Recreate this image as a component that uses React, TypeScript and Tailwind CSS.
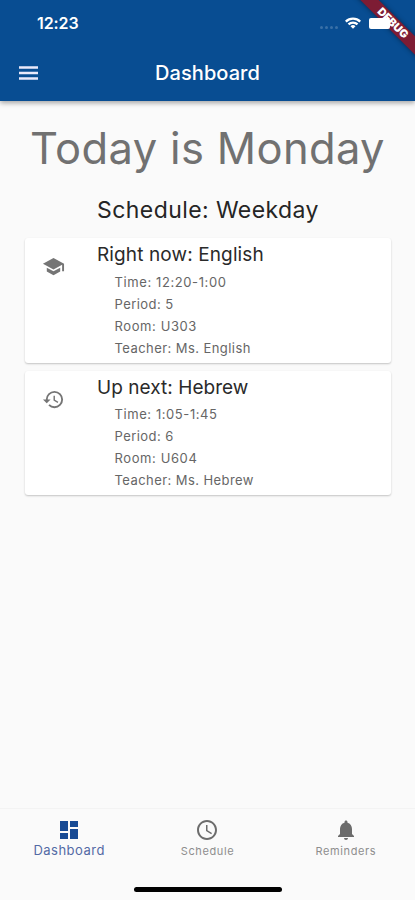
import type { ReactNode } from "react";
import {
  MdAccessTime,
  MdDashboard,
  MdNotifications,
  MdRestore,
  MdSchool,
} from "react-icons/md";

function StatusBar() {
  return (
    <div className="flex h-[46px] items-center pl-[37px] pr-[25px]">
      <span className="text-[16px] font-semibold leading-none tracking-[-0.1px]">12:23</span>
      <div className="ml-auto flex items-center">
        <div className="mr-[7px] mt-[9px] flex gap-[2px]">
          <i className="size-[3px] rounded-full bg-white/20" />
          <i className="size-[3px] rounded-full bg-white/20" />
          <i className="size-[3px] rounded-full bg-white/20" />
          <i className="size-[3px] rounded-full bg-white/20" />
        </div>
        <svg width="16" height="12" viewBox="0 0 16 12" fill="none" stroke="white" strokeWidth="2.3">
          <path d="M0.8 4.6a10.2 10.2 0 0 1 14.4 0" />
          <path d="M3.5 7.4a6.4 6.4 0 0 1 9 0" />
          <path d="M8 11.8 5.5 9.2a3.6 3.6 0 0 1 5 0Z" fill="white" stroke="none" />
        </svg>
        <div className="relative z-10 ml-[8px] h-[11px] w-[21px] rounded-[2px] bg-white" />
      </div>
    </div>
  );
}

function DebugBanner() {
  return (
    <div className="absolute right-0 top-0 size-[70px] overflow-hidden">
      <div className="absolute left-[-3px] top-[16px] flex h-[13px] w-[100px] rotate-45 items-center justify-center bg-[#7d1c34] pl-[2px] text-[11px] font-black leading-none text-white shadow-[0_0_5px_rgba(0,0,0,0.45)]">
        DEBUG
      </div>
    </div>
  );
}

type CardProps = { icon: ReactNode; title: string; titleClass: string; lines: [string, string][] };

function PeriodCard({ icon, title, titleClass, lines }: CardProps) {
  return (
    <section className="flex h-[124.5px] rounded-[3px] bg-white shadow-[0_1px_2px_rgba(0,0,0,0.22)]">
      <div className="w-[72px] pl-[17px] pt-[17px] text-[#757575]">{icon}</div>
      <div className="pt-[5px]">
        <h3 className={`text-[19px] leading-[24px] text-[#2a2a2a] ${titleClass}`}>{title}</h3>
        <ul className="pl-[17.5px] pt-[3.5px]">
          {lines.map(([text, tracking]) => (
            <li key={text} className={`h-[22px] text-[13px] leading-[22px] text-[#666] ${tracking}`}>
              {text}
            </li>
          ))}
        </ul>
      </div>
    </section>
  );
}

export default function App() {
  return (
    <div className="relative flex h-[900px] w-[415px] flex-col overflow-hidden whitespace-nowrap bg-[#fafafa] font-['Inter',sans-serif]">
      <header className="z-10 h-[101px] bg-[#084d92] text-white shadow-[0_2px_5px_rgba(0,0,0,0.35)]">
        <StatusBar />
        <div className="grid h-[54px] grid-cols-[56px_1fr_56px] items-center">
          <svg className="ml-[19px]" width="19" height="14" viewBox="0 0 19 14" stroke="#e9e9fb" strokeWidth="2.6">
            <path d="M0 1.5h19M0 7h19M0 12.5h19" />
          </svg>
          <h1 className="text-center text-[20px] font-medium tracking-[0.05px]">Dashboard</h1>
        </div>
        <DebugBanner />
      </header>

      <main className="flex-1 px-[25px]">
        <h2 className="mt-[20px] text-center text-[43.5px] font-normal leading-[54px] tracking-[0.35px] text-[#717171]">
          Today is Monday
        </h2>
        <p className="mt-[19px] pl-[1px] text-center text-[23px] leading-[32px] tracking-[0.42px] text-[#252525]">
          Schedule: Weekday
        </p>
        <div className="mt-[12px] flex w-[366px] flex-col gap-[8px]">
          <PeriodCard
            icon={<MdSchool size={23} />}
            title="Right now: English"
            titleClass="tracking-[0.12px]"
            lines={[
              ["Time: 12:20-1:00", "tracking-[0.6px]"],
              ["Period: 5", "tracking-[0.45px]"],
              ["Room: U303", "tracking-[0.6px]"],
              ["Teacher: Ms. English", "tracking-[0.43px]"],
            ]}
          />
          <PeriodCard
            icon={<MdRestore size={23} />}
            title="Up next: Hebrew"
            titleClass="tracking-[0.05px]"
            lines={[
              ["Time: 1:05-1:45", "tracking-[0.58px]"],
              ["Period: 6", "tracking-[0.45px]"],
              ["Room: U604", "tracking-[0.6px]"],
              ["Teacher: Ms. Hebrew", "tracking-[0.43px]"],
            ]}
          />
        </div>
      </main>

      <footer className="h-[92px] border-t border-[#f3f3f3]">
        <nav className="grid h-[74px] grid-cols-3 text-[#6c6c6c]">
          <div className="flex flex-col items-center pt-[9px] text-[#174a94]">
            <MdDashboard size={24} />
            <span className="text-[13px] leading-[16px] tracking-[0.5px] text-[#536aa5]">Dashboard</span>
          </div>
          <div className="flex flex-col items-center pt-[9px]">
            <MdAccessTime size={24} />
            <span className="mt-[1px] text-[11px] leading-[16px] tracking-[0.6px] text-[#8e8e8e]">Schedule</span>
          </div>
          <div className="flex flex-col items-center pt-[9px]">
            <MdNotifications size={24} />
            <span className="mt-[1px] text-[11px] leading-[16px] tracking-[0.6px] text-[#8e8e8e]">Reminders</span>
          </div>
        </nav>
        <div className="mx-auto mt-[4px] h-[5px] w-[148px] rounded-full bg-black" />
      </footer>
    </div>
  );
}
